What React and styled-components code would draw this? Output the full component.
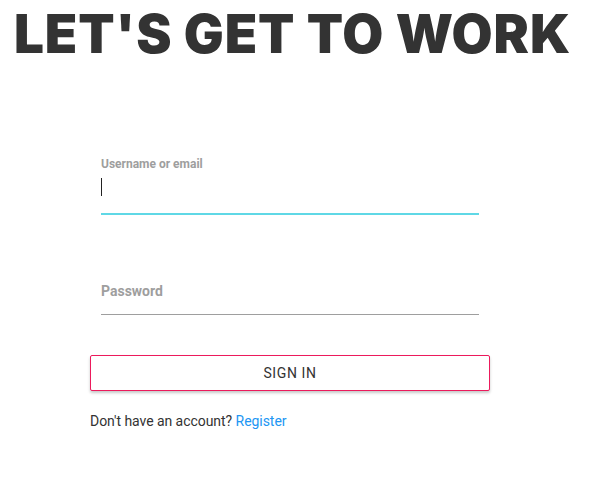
import React from 'react';
import styled, { createGlobalStyle } from 'styled-components';

const GlobalStyle = createGlobalStyle`
  body {
    margin: 0;
    background: #ffffff;
    font-family: Roboto, 'Liberation Sans', sans-serif;
  }
`

const Page = styled.div`
  width: 600px;
  height: 500px;
  overflow: hidden;
`

const Title = styled.h1`
  margin: 0;
  padding: 4px 0 0 14px;
  font-family: Inter, 'Liberation Sans', sans-serif;
  font-weight: 900;
  font-size: 53px;
  line-height: 60px;
  letter-spacing: 0.9px;
  color: #333333;
  white-space: nowrap;
`

const Form = styled.form`
  width: 400px;
  margin: 91px 0 0 90px;
  display: flex;
  flex-direction: column;
`

const Field = styled.div`
  position: relative;
  margin: 0 11px;
  height: ${p => p.$h}px;
  margin-bottom: ${p => p.$gap}px;
  border-bottom: ${p => (p.$active ? '2px solid #5fd8e6' : '1px solid #9e9e9e')};
  display: flex;
  flex-direction: column;
`

const Label = styled.label`
  font-family: Roboto, sans-serif;
  font-weight: 700;
  font-size: ${p => (p.$float ? 12 : 14)}px;
  color: #9e9e9e;
  line-height: ${p => (p.$float ? 14 : 16)}px;
  margin-top: ${p => p.$top}px;
`

const Caret = styled.span`
  display: block;
  width: 1px;
  height: 18px;
  background: #222222;
  margin-top: 7px;
`

const Button = styled.button`
  height: 36px;
  border: 1px solid #ec1a5c;
  border-radius: 2px;
  background: #ffffff;
  box-shadow: 0 2px 3px rgba(0, 0, 0, 0.22);
  font-family: Roboto, sans-serif;
  font-size: 14px;
  letter-spacing: 0.6px;
  color: #333333;
  text-transform: uppercase;
  cursor: pointer;
`

const Footer = styled.p`
  margin: 22px 0 0;
  font-family: Roboto, sans-serif;
  font-size: 14px;
  letter-spacing: -0.05px;
  color: #333333;
`

const Link = styled.a`
  color: #2196f3;
  text-decoration: none;
`

export default function App() {
  return (
    <Page>
      <GlobalStyle />
      <Title>LET'S GET TO WORK</Title>
      <Form onSubmit={e => e.preventDefault()}>
        <Field $h={58} $gap={57} $active>
          <Label $float $top={2}>Username or email</Label>
          <Caret />
        </Field>
        <Field $h={42} $gap={40}>
          <Label $top={11}>Password</Label>
        </Field>
        <Button type="submit">Sign in</Button>
        <Footer>
          Don't have an account? <Link href="#">Register</Link>
        </Footer>
      </Form>
    </Page>
  );
}
